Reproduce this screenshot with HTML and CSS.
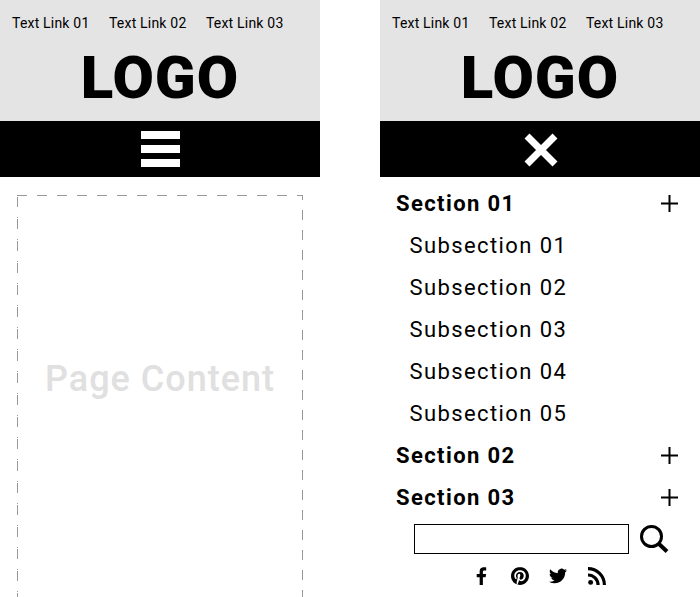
FILE: index.html
```html
<!DOCTYPE html>
<html lang="en">
<head>
    <meta charset="UTF-8">
    <meta name="viewport" content="width=device-width, initial-scale=1.0">
    <title>Mobile Menu Wireframe</title>
    <link rel="stylesheet" href="styles.css">
</head>
<body>
    <div class="screens">
        <!-- Closed menu -->
        <div class="phone">
            <header class="header">
                <div class="top-links">
                    <a href="#">Text Link 01</a>
                    <a href="#">Text Link 02</a>
                    <a href="#">Text Link 03</a>
                </div>
                <div class="logo">LOGO</div>
            </header>
            <div class="nav-bar">
                <div class="hamburger"><span></span><span></span><span></span></div>
            </div>
            <main class="page-area">
                <div class="page-box">Page Content</div>
            </main>
        </div>

        <!-- Open menu -->
        <div class="phone">
            <header class="header">
                <div class="top-links">
                    <a href="#">Text Link 01</a>
                    <a href="#">Text Link 02</a>
                    <a href="#">Text Link 03</a>
                </div>
                <div class="logo">LOGO</div>
            </header>
            <div class="nav-bar">
                <svg class="close-icon" viewBox="0 0 34 34" width="34" height="34">
                    <path d="M3 3L31 31M31 3L3 31" stroke="#fff" stroke-width="7"/>
                </svg>
            </div>
            <nav class="menu">
                <div class="section">
                    <span>Section 01</span>
                    <svg class="plus" viewBox="0 0 17 17" width="17" height="17"><path d="M8.500 0V17M0 8.500H17" stroke="#000" stroke-width="2"/></svg>
                </div>
                <div class="sub">Subsection 01</div>
                <div class="sub">Subsection 02</div>
                <div class="sub">Subsection 03</div>
                <div class="sub">Subsection 04</div>
                <div class="sub">Subsection 05</div>
                <div class="section">
                    <span>Section 02</span>
                    <svg class="plus" viewBox="0 0 17 17" width="17" height="17"><path d="M8.500 0V17M0 8.500H17" stroke="#000" stroke-width="2"/></svg>
                </div>
                <div class="section">
                    <span>Section 03</span>
                    <svg class="plus" viewBox="0 0 17 17" width="17" height="17"><path d="M8.500 0V17M0 8.500H17" stroke="#000" stroke-width="2"/></svg>
                </div>
            </nav>
            <div class="search">
                <input class="search-input" type="text">
                <svg viewBox="0 0 29 28" width="29" height="28">
                    <circle cx="11.500" cy="11.500" r="10" fill="none" stroke="#000" stroke-width="3"/>
                    <path d="M18.500 18.500L27 26.500" stroke="#000" stroke-width="4"/>
                </svg>
            </div>
            <div class="social">
                <svg viewBox="0 0 24 24" width="18" height="18"><path d="M14.500 24V13.500h3.700l.6-4.300h-4.300V6.600c0-1.200.3-2.100 2.100-2.100h2.300V.6C18.500.5 17.100.4 15.600.4c-3.200 0-5.400 2-5.400 5.500v3.300H6.300v4.300h3.900V24z"/></svg>
                <svg viewBox="0 0 24 24" width="18" height="18"><path d="M12.017 0C5.396 0 .029 5.367.029 11.987c0 5.079 3.158 9.417 7.618 11.162-.105-.949-.199-2.403.041-3.439.219-.937 1.406-5.957 1.406-5.957s-.359-.72-.359-1.781c0-1.663.967-2.911 2.168-2.911 1.024 0 1.518.769 1.518 1.688 0 1.029-.653 2.567-.992 3.992-.285 1.193.6 2.165 1.775 2.165 2.128 0 3.768-2.245 3.768-5.487 0-2.861-2.063-4.869-5.008-4.869-3.410 0-5.409 2.562-5.409 5.199 0 1.033.394 2.143.889 2.741.099.12.112.225.085.345-.09.375-.293 1.199-.334 1.363-.053.225-.172.271-.401.165-1.495-.69-2.433-2.878-2.433-4.646 0-3.776 2.748-7.252 7.920-7.252 4.158 0 7.392 2.967 7.392 6.923 0 4.135-2.607 7.462-6.233 7.462-1.214 0-2.354-.629-2.758-1.379l-.749 2.848c-.269 1.045-1.004 2.352-1.498 3.146 1.123.345 2.306.535 3.550.535 6.607 0 11.985-5.365 11.985-11.987C23.970 5.390 18.592.026 11.985.026L12.017 0z"/></svg>
                <svg viewBox="0 0 24 24" width="18" height="18"><path d="M23.950 4.570a10 10 0 0 1-2.820.77 4.960 4.960 0 0 0 2.160-2.720c-.95.55-2 .96-3.120 1.190a4.920 4.920 0 0 0-8.380 4.480C7.690 8.090 4.070 6.130 1.640 3.160a4.820 4.820 0 0 0-.67 2.480c0 1.710.87 3.210 2.190 4.100a4.900 4.900 0 0 1-2.230-.62v.06a4.920 4.920 0 0 0 3.950 4.830 5 5 0 0 1-2.210.08 4.940 4.940 0 0 0 4.600 3.420A9.870 9.870 0 0 1 0 19.540a14 14 0 0 0 7.560 2.210c9.050 0 14-7.500 14-13.980 0-.21 0-.42-.02-.63A9.940 9.940 0 0 0 24 4.590z"/></svg>
                <svg viewBox="0 0 24 24" width="18" height="18"><circle cx="3.500" cy="20.500" r="3.300"/><path d="M0 8.500v4.200A11.300 11.300 0 0 1 11.300 24h4.200A15.500 15.500 0 0 0 0 8.500z"/><path d="M0 0v4.200A19.800 19.800 0 0 1 19.800 24H24A24 24 0 0 0 0 0z"/></svg>
            </div>
        </div>
    </div>
</body>
</html>
```

FILE: styles.css
```css
html, body {
    margin: 0;
    padding: 0;
    background-color: #fff;
}
body {
    font-family: Roboto, "Liberation Sans", sans-serif;
    color: #000;
    height: 597px;
    overflow: hidden;
}
.screens {
    display: flex;
    gap: 60px;
}
.phone {
    width: 320px;
    height: 597px;
    overflow: hidden;
}
.header {
    height: 121px;
    background-color: #e4e4e4;
    overflow: hidden;
}
.top-links {
    display: flex;
    gap: 19.5px;
    padding: 15px 12px 0;
    font-size: 14px;
    line-height: 16px;
    letter-spacing: 0.2px;
}
.top-links a {
    color: #000;
    text-decoration: none;
}
.logo {
    margin-top: 12px;
    text-align: center;
    font-size: 60px;
    line-height: 70px;
    font-weight: 900;
    letter-spacing: 1px;
}
.nav-bar {
    height: 56px;
    background-color: #000;
    display: flex;
    align-items: center;
    justify-content: center;
}
.hamburger {
    display: flex;
    flex-direction: column;
    gap: 6px;
    width: 39px;
}
.hamburger span {
    display: block;
    height: 8px;
    background-color: #fff;
}
.close-icon {
    margin: 2px 0 0 1px;
}
.page-area {
    padding: 18px 17px 0;
}
.page-box {
    box-sizing: border-box;
    width: 286px;
    height: 440px;
    padding-top: 163px;
    text-align: center;
    font-size: 36px;
    line-height: 42px;
    font-weight: 500;
    letter-spacing: 1px;
    color: #e0e0e0;
    background-image:
        repeating-linear-gradient(90deg, #999 0 10px, transparent 10px 20px),
        repeating-linear-gradient(180deg, #999 0 1px, transparent 1px 2px, #999 2px 12px, transparent 12px 22px),
        repeating-linear-gradient(180deg, #999 0 5px, transparent 5px 15px, #999 15px 20px);
    background-size: 100% 1px, 1px 100%, 1px 100%;
    background-position: top left, top left, top right;
    background-repeat: no-repeat;
}
.menu {
    padding-top: 5px;
}
.section, .sub {
    height: 42px;
    line-height: 44px;
    font-size: 22px;
}
.section {
    display: flex;
    align-items: center;
    justify-content: space-between;
    padding: 0 22px 0 16px;
    font-weight: 700;
    letter-spacing: 1.4px;
}
.section span {
    margin-top: 2px;
}
.plus {
    margin-top: 1px;
}
.sub {
    padding-left: 29.5px;
    letter-spacing: 1.4px;
}
.search {
    display: flex;
    align-items: center;
    gap: 11px;
    padding-left: 34px;
    margin-top: 6px;
}
.search-input {
    box-sizing: border-box;
    width: 215px;
    height: 30px;
    padding: 0;
    border: 1px solid #000;
    border-radius: 0;
    background: #fff;
    outline: none;
}
.social {
    display: flex;
    justify-content: center;
    gap: 20.5px;
    margin-top: 13px;
    padding-right: 2.5px;
}
```
